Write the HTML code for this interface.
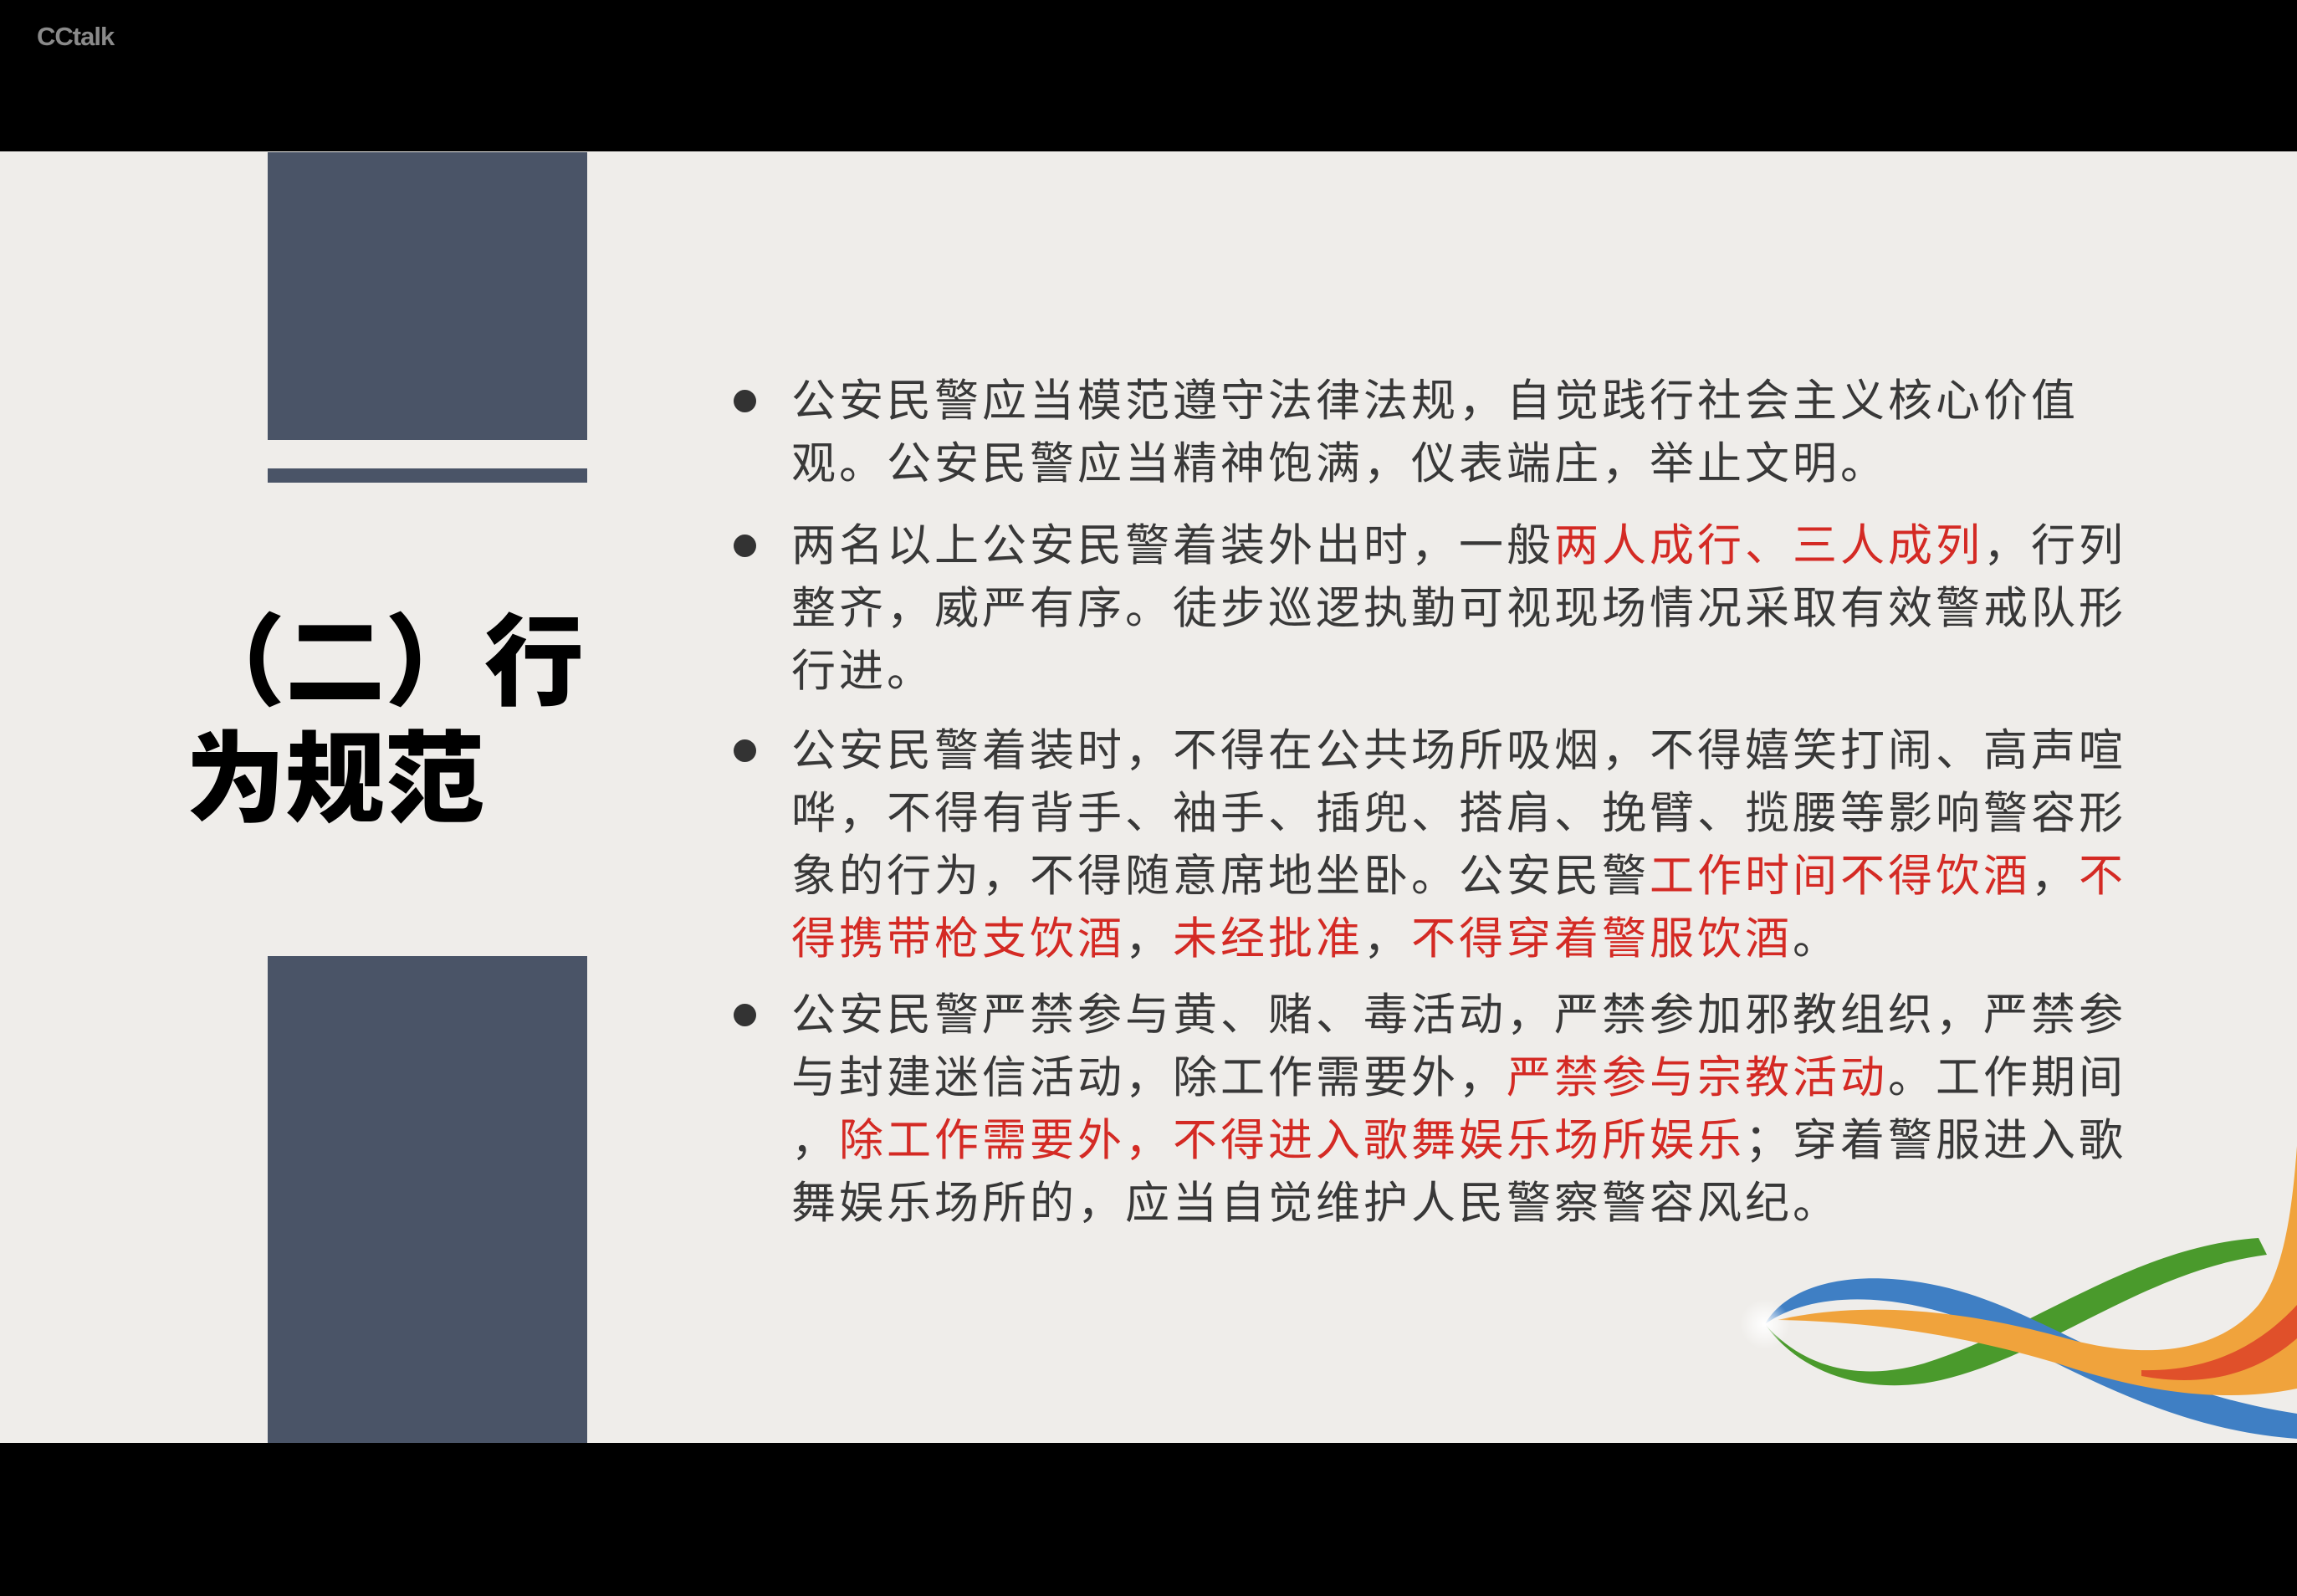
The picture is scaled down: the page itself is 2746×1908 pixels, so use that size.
<!DOCTYPE html>
<html><head><meta charset="utf-8"><style>
html,body{margin:0;padding:0}
body{width:2746px;height:1908px;background:#000;position:relative;overflow:hidden;font-family:"Liberation Sans","Noto Sans CJK SC",sans-serif}
.slide{position:absolute;left:0;top:181px;width:2746px;height:1544px;background:#efedea;overflow:hidden}
.logo{position:absolute;left:44px;top:26px;color:#8a8a8a;font-size:31px;font-weight:bold;letter-spacing:-1px}
.rect{position:absolute;background:#4a5467;left:320px;width:382px}
.title{position:absolute;left:222px;top:531px;font-size:119px;font-weight:900;line-height:140px;color:#000;font-family:"Noto Sans CJK SC",sans-serif}
.p{position:absolute;left:946px;font-size:53px;letter-spacing:4px;line-height:75px;color:#383838;font-family:"Liberation Sans","Noto Sans CJK SC",sans-serif;white-space:nowrap}
.p:before{content:"";position:absolute;left:-69px;top:24px;width:27px;height:27px;border-radius:50%;background:#333}
.r{color:#d42a24}
</style></head><body>
<div class="logo">CCtalk</div>
<div class="slide">
<div class="rect" style="top:1px;height:344px"></div>
<div class="rect" style="top:379px;height:17px"></div>
<div class="rect" style="top:962px;height:600px"></div>
<div class="title">（二）行<br>为规范</div>
<div class="p" style="top:261px">公安民警应当模范遵守法律法规，自觉践行社会主义核心价值<br>观。公安民警应当精神饱满，仪表端庄，举止文明。</div>
<div class="p" style="top:434px">两名以上公安民警着装外出时，一般<span class="r">两人成行、三人成列</span>，行列<br>整齐，威严有序。徒步巡逻执勤可视现场情况采取有效警戒队形<br>行进。</div>
<div class="p" style="top:679px">公安民警着装时，不得在公共场所吸烟，不得嬉笑打闹、高声喧<br>哗，不得有背手、袖手、插兜、搭肩、挽臂、揽腰等影响警容形<br>象的行为，不得随意席地坐卧。公安民警<span class="r">工作时间不得饮酒</span>，<span class="r">不</span><br><span class="r">得携带枪支饮酒</span>，<span class="r">未经批准</span>，<span class="r">不得穿着警服饮酒</span>。</div>
<div class="p" style="top:995px">公安民警严禁参与黄、赌、毒活动，严禁参加邪教组织，严禁参<br>与封建迷信活动，除工作需要外，<span class="r">严禁参与宗教活动</span>。工作期间<br>，<span class="r">除工作需要外，不得进入歌舞娱乐场所娱乐</span>；穿着警服进入歌<br>舞娱乐场所的，应当自觉维护人民警察警容风纪。</div>
<svg style="position:absolute;left:0;top:-181px" width="2746" height="1908">
<defs><radialGradient id="g"><stop offset="0" stop-color="#fff"/><stop offset="1" stop-color="#fff" stop-opacity="0"/></radialGradient></defs>
<path d="M2110 1583 C2160 1640 2230 1650 2300 1630 C2430 1590 2550 1490 2700 1480 L2710 1500 C2560 1520 2450 1620 2320 1650 C2230 1670 2150 1640 2110 1583Z" fill="#4a9a2c"/>
<path d="M2110 1583 C2140 1530 2230 1515 2330 1540 C2450 1570 2550 1660 2746 1690 L2746 1720 C2600 1710 2480 1640 2380 1590 C2280 1545 2170 1540 2110 1583Z" fill="#3f7fc4"/>
<path d="M2125 1578 C2250 1550 2380 1575 2470 1600 C2560 1625 2650 1620 2700 1560 C2730 1520 2740 1450 2746 1370 L2746 1660 C2650 1680 2550 1660 2460 1630 C2360 1600 2250 1580 2125 1578Z" fill="#f0a33c"/>
<path d="M2560 1638 C2640 1640 2700 1610 2746 1560 L2746 1600 C2700 1640 2640 1660 2560 1645Z" fill="#e0502a"/>
<circle cx="2110" cy="1583" r="30" fill="url(#g)"/>
</svg>
</div>
</body></html>
